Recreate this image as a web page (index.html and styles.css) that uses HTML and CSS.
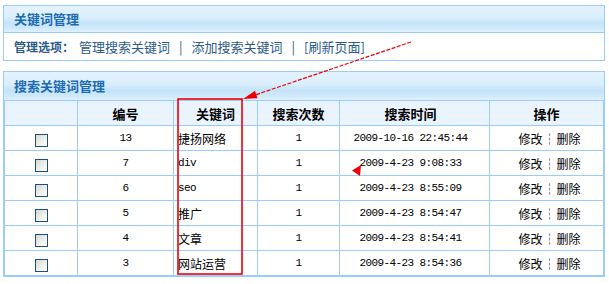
FILE: index.html
```html
<!DOCTYPE html>
<html lang="zh-CN">
<head>
<meta charset="utf-8">
<title>关键词管理</title>
<link rel="stylesheet" href="styles.css">
</head>
<body>
<div class="page">
  <div class="panel">
    <div class="panel-title">关键词管理</div>
    <div class="options">
      <b class="options-label">管理选项：</b><a class="opt-link">管理搜索关键词</a><span class="sep">|</span><a class="opt-link">添加搜索关键词</a><span class="sep">|</span><a class="opt-link">[刷新页面]</a>
    </div>
  </div>

  <div class="panel panel-list">
    <div class="panel-title panel-title-tall">搜索关键词管理</div>
    <table class="grid">
      <colgroup>
        <col class="c1"><col class="c2"><col class="c3"><col class="c4"><col class="c5"><col class="c6">
      </colgroup>
      <thead>
        <tr>
          <th></th><th>编号</th><th>关键词</th><th>搜索次数</th><th class="time">搜索时间</th><th>操作</th>
        </tr>
      </thead>
      <tbody>
        <tr><td><span class="box"></span></td><td class="num">13</td><td class="kw">捷扬网络</td><td class="num">1</td><td class="time num">2009-10-16 22:45:44</td><td class="ops">修改<span class="bar">┆</span>删除</td></tr>
        <tr><td><span class="box"></span></td><td class="num">7</td><td class="kw mono">div</td><td class="num">1</td><td class="time num">2009-4-23 9:08:33</td><td class="ops">修改<span class="bar">┆</span>删除</td></tr>
        <tr><td><span class="box"></span></td><td class="num">6</td><td class="kw mono">seo</td><td class="num">1</td><td class="time num">2009-4-23 8:55:09</td><td class="ops">修改<span class="bar">┆</span>删除</td></tr>
        <tr><td><span class="box"></span></td><td class="num">5</td><td class="kw">推广</td><td class="num">1</td><td class="time num">2009-4-23 8:54:47</td><td class="ops">修改<span class="bar">┆</span>删除</td></tr>
        <tr><td><span class="box"></span></td><td class="num">4</td><td class="kw">文章</td><td class="num">1</td><td class="time num">2009-4-23 8:54:41</td><td class="ops">修改<span class="bar">┆</span>删除</td></tr>
        <tr><td><span class="box"></span></td><td class="num">3</td><td class="kw">网站运营</td><td class="num">1</td><td class="time num">2009-4-23 8:54:36</td><td class="ops">修改<span class="bar">┆</span>删除</td></tr>
      </tbody>
    </table>
  </div>

  <svg class="annot" width="609" height="284" viewBox="0 0 609 284">
    <rect x="178" y="99" width="64" height="175" fill="none" stroke="#ee0000" stroke-width="1.6"/>
    <line x1="411" y1="42" x2="255" y2="95" stroke="#ee0000" stroke-width="1.2" stroke-dasharray="4 1.5"/>
    <polygon points="243,99 257.5,98.3 255,90.7" fill="#ee0000"/>
    <polygon points="352,170.5 361,165 360,176" fill="#ee0000"/>
  </svg>
</div>
</body>
</html>
```
FILE: styles.css
```css
html, body {
  margin: 0;
  padding: 0;
  background: #ffffff;
}

body {
  font-family: "Noto Sans CJK SC", "Noto Sans", sans-serif;
  font-size: 12px;
  color: #000;
}

.page {
  position: relative;
  width: 609px;
  height: 284px;
  padding: 5px 0 0 3px;
  box-sizing: border-box;
}

.panel {
  width: 600px;
  border: 1px solid #99ccff;
}

.panel-list {
  margin-top: 10px;
}

.panel-title {
  height: 26px;
  line-height: 26px;
  padding-left: 10px;
  font-size: 13px;
  font-weight: bold;
  color: #1d6bb3;
  background: linear-gradient(#e4f3fe 0%, #d9eefd 45%, #c4e3f9 65%, #cfe9fb 85%, #dff1fd 100%);
  border-bottom: 1px solid #99ccff;
}

.panel-title-tall {
  height: 28px;
  line-height: 28px;
  border-bottom: 0;
}

.options {
  height: 27px;
  line-height: 27px;
  padding-left: 10px;
  font-size: 13px;
  color: #2d5b88;
}

.options-label {
  font-size: 12px;
  margin-right: 5px;
}

.opt-link {
  color: #2d5b88;
  text-decoration: none;
}

.sep {
  margin: 0 9px;
}

.grid {
  width: 600px;
  table-layout: fixed;
  border-collapse: separate;
  border-spacing: 0;
  border-top: 1px solid #99ccff;
  border-left: 1px solid #99ccff;
}

.c1 { width: 73px; }
.c2 { width: 96px; }
.c3 { width: 84px; }
.c4 { width: 82px; }
.c5 { width: 150px; }
.c6 { width: 114px; }

.grid tr {
  height: 25px;
}

.grid th,
.grid td {
  border-right: 1px solid #99ccff;
  border-bottom: 1px solid #99ccff;
  padding: 0;
  text-align: center;
  vertical-align: middle;
  white-space: nowrap;
  overflow: hidden;
}

.grid th {
  background: #eaf4fe;
  font-size: 13px;
  font-weight: bold;
  color: #000;
}

.grid td.kw {
  text-align: left;
  padding-left: 4px;
  font-size: 12px;
}

.grid td.mono,
.grid td.num {
  font-family: "Liberation Mono", "DejaVu Sans Mono", monospace;
  font-size: 11px;
  letter-spacing: -0.6px;
}

.grid .time {
  padding-right: 8px;
}

.grid td.ops {
  padding-left: 6px;
}

.bar {
  margin: 0 1px;
}

.box {
  display: inline-block;
  width: 11px;
  height: 11px;
  border: 1px solid #1f4f7e;
  background: linear-gradient(135deg, #d8d8d2 0%, #efefeb 55%, #ffffff 100%);
  vertical-align: middle;
}

.annot {
  position: absolute;
  left: 0;
  top: 0;
  pointer-events: none;
}
```
